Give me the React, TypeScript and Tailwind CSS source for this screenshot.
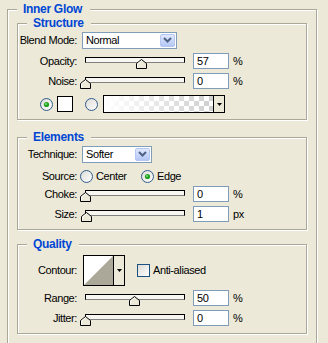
import React from 'react';

const ETCH = 'border border-[#ACA899] shadow-[inset_1px_1px_0_#fff,1px_1px_0_#fff]';
const LEGEND = 'bg-[#ECE9D8] text-[12px] leading-[14px] font-bold tracking-[-0.3px] text-[#0046D5]';

function Group({ title, className, children }: { title: string; className?: string; children: React.ReactNode }) {
  return (
    <fieldset className={`${ETCH} w-[290px] ${className ?? ''}`}>
      <legend className={`ml-[9px] pl-[6px] pr-[7px] ${LEGEND}`}>{title}</legend>
      {children}
    </fieldset>
  );
}

function Label({ text }: { text: string }) {
  return <span className="w-[59px] shrink-0 text-right">{text}</span>;
}

function Chevron() {
  return (
    <svg width="9" height="6" viewBox="0 0 9 6">
      <polyline points="1,1 4.5,4.5 8,1" fill="none" stroke="#4D6185" strokeWidth="2" />
    </svg>
  );
}

function Select({ value, w }: { value: string; w: string }) {
  return (
    <div className={`ml-[5px] flex h-[17px] items-stretch border border-[#7F9DB9] bg-white ${w}`}>
      <span className="flex flex-1 items-center pl-[3px]">{value}</span>
      <span className="m-px flex w-[15px] items-center justify-center rounded-[2px] border border-[#B4C6F2] bg-gradient-to-b from-[#E0E8FD] to-[#B3C7F5]">
        <Chevron />
      </span>
    </div>
  );
}

function Slider({ value }: { value: number }) {
  return (
    <div className="relative ml-[8px] h-[16px] w-[100px]">
      <div className="mt-[4px] h-[6px] border border-black border-b-[#808080] bg-[#F7F6F0]" />
      <svg
        className="absolute top-[6px]"
        style={{ left: Math.round(value * 0.98) - 5 }}
        width="11"
        height="10"
        viewBox="0 0 11 10"
      >
        <polygon points="0.5,4.5 5.5,0.5 10.5,4.5 10.5,9.5 0.5,9.5" fill="#ECE9D8" stroke="#000" />
        <polyline points="1.5,8.5 1.5,5 5.5,1.7" fill="none" stroke="#fff" />
      </svg>
    </div>
  );
}

function NumField({ value, unit }: { value: string; unit: string }) {
  return (
    <>
      <div className="ml-[8px] flex h-[16px] w-[36px] items-center border border-[#7F9DB9] bg-white pl-[3px]">{value}</div>
      <span className="ml-[4px]">{unit}</span>
    </>
  );
}

function SliderRow({ label, value, unit, className }: { label: string; value: number; unit: string; className?: string }) {
  return (
    <div className={`flex h-[20px] items-center ${className ?? ''}`}>
      <Label text={label} />
      <Slider value={value} />
      <NumField value={String(value)} unit={unit} />
    </div>
  );
}

function Radio({ checked, id }: { checked?: boolean; id: string }) {
  return (
    <svg width="13" height="13" viewBox="0 0 13 13" className="shrink-0">
      <defs>
        <linearGradient id={id} x1="0" y1="0" x2="1" y2="1">
          <stop offset="0" stopColor="#DCDBD5" />
          <stop offset="1" stopColor="#fff" />
        </linearGradient>
      </defs>
      <circle cx="6.5" cy="6.5" r="6" fill={`url(#${id})`} stroke="#2F5A8C" />
      {checked && (
        <>
          <circle cx="6.5" cy="6.5" r="2.6" fill="#21A121" />
          <circle cx="6" cy="6" r="1" fill="#7EE07E" />
        </>
      )}
    </svg>
  );
}

function DropArrow() {
  return (
    <svg width="5" height="3" viewBox="0 0 5 3">
      <polygon points="0,0 5,0 2.5,3" fill="#000" />
    </svg>
  );
}

export default function App() {
  return (
    <div className="h-[343px] w-[328px] overflow-hidden bg-[#ECE9D8] pl-[7px] pt-[2px] font-['Liberation_Sans',Arial,sans-serif] text-[11px] leading-[13px] tracking-[-0.4px] text-black">
      <fieldset className={`${ETCH} w-[310px] pb-[30px] pl-[9px]`}>
        <legend className={`pl-[6px] pr-[8px] ${LEGEND}`}>Inner Glow</legend>

        <Group title="Structure" className="pb-[6px]">
          <div className="flex h-[20px] items-center">
            <Label text="Blend Mode:" />
            <Select value="Normal" w="w-[95px]" />
          </div>
          <SliderRow label="Opacity:" value={57} unit="%" className="mt-px" />
          <SliderRow label="Noise:" value={0} unit="%" />
          <div className="mt-[4px] flex h-[18px] items-center pl-[22px]">
            <Radio checked id="rg1" />
            <div className="ml-[4px] h-[16px] w-[16px] border border-black bg-white" />
            <span className="ml-[12px]"><Radio id="rg2" /></span>
            <div className="ml-[5px] flex h-[18px] w-[122px] border border-black">
              <div className="flex-1 bg-[linear-gradient(to_right,#fff_0%,rgba(255,255,255,0)_100%),conic-gradient(#cfcfcf_25%,#fff_0_50%,#cfcfcf_0_75%,#fff_0)] [background-size:100%_100%,10px_10px]" />
              <div className="flex w-[11px] items-center justify-center border-l border-black bg-[#ECE9D8]">
                <DropArrow />
              </div>
            </div>
          </div>
        </Group>

        <Group title="Elements" className="mt-[10px] pb-[5px]">
          <div className="flex h-[20px] items-center">
            <Label text="Technique:" />
            <Select value="Softer" w="w-[70px]" />
          </div>
          <div className="mt-[4px] flex h-[16px] items-center">
            <Label text="Source:" />
            <span className="ml-[3px]"><Radio id="rs1" /></span>
            <span className="ml-[3px] w-[45px]">Center</span>
            <Radio checked id="rs2" />
            <span className="ml-[3px]">Edge</span>
          </div>
          <SliderRow label="Choke:" value={0} unit="%" />
          <SliderRow label="Size:" value={1} unit="px" />
        </Group>

        <Group title="Quality" className="mt-[7px] pb-[5px]">
          <div className="mt-[4px] flex h-[31px] items-center">
            <Label text="Contour:" />
            <div className="ml-[6px] flex h-[31px] w-[42px] border border-black">
              <svg width="29" height="29" viewBox="0 0 29 29" className="shrink-0">
                <rect width="29" height="29" fill="#fff" />
                <polygon points="0,29 29,0 29,29" fill="#ACA899" />
              </svg>
              <div className="flex flex-1 items-center justify-center border-l border-black bg-[#ECE9D8]">
                <DropArrow />
              </div>
            </div>
            <div className="ml-[12px] h-[13px] w-[13px] border border-[#1C5180] bg-gradient-to-br from-[#DCDBD5] to-white" />
            <span className="ml-[3px]">Anti-aliased</span>
          </div>
          <SliderRow label="Range:" value={50} unit="%" className="mt-[2px]" />
          <SliderRow label="Jitter:" value={0} unit="%" />
        </Group>
      </fieldset>
    </div>
  );
}
